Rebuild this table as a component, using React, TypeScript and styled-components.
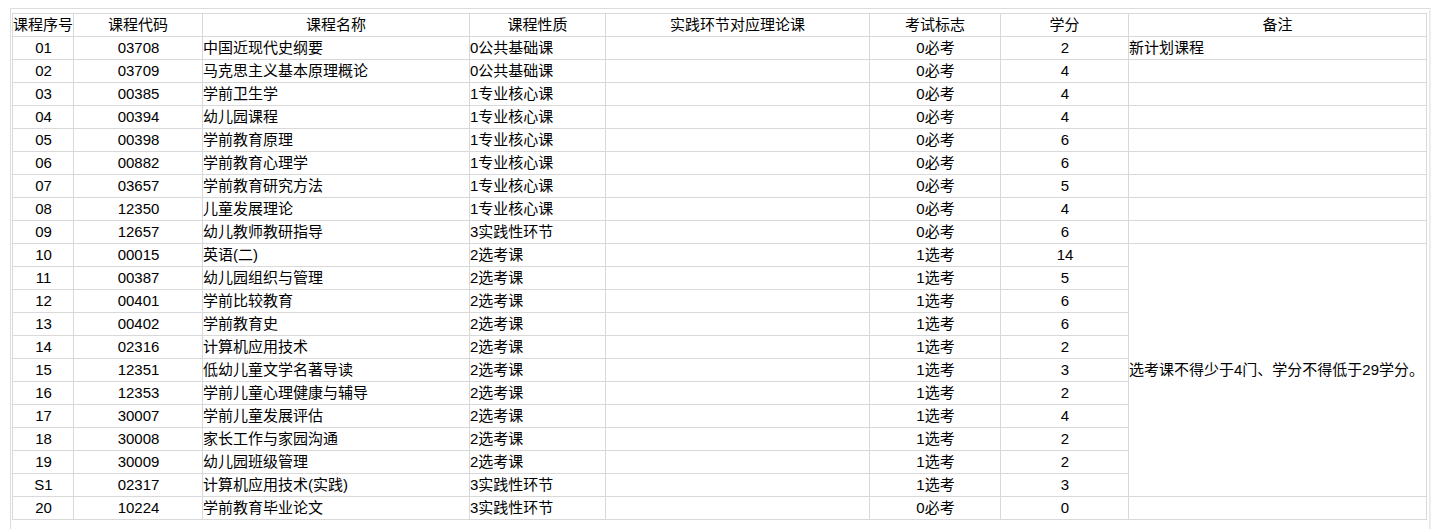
import React from "react";
import styled, { createGlobalStyle } from "styled-components";

const GlobalStyle = createGlobalStyle`
  html, body {
    margin: 0;
    padding: 0;
    background: #ffffff;
  }
  body {
    font-family: "Liberation Sans", "Noto Sans CJK SC", sans-serif;
    color: #000000;
  }
`;

const Frame = styled.div`
  margin: 8px 0 0 10px;
  min-height: 520px;
  border-top: 1px solid #dddddd;
  border-left: 1px solid #dddddd;
  display: flex;
  align-items: flex-start;
`;

const Sheet = styled.table`
  margin: 4px 0 0 1px;
  border-collapse: collapse;
  table-layout: fixed;
  width: 1414px;
  font-size: 15px;
  flex: none;
`;

const ScrollTrack = styled.div`
  align-self: stretch;
  width: 4px;
  margin: 1px 0 0 2px;
  background: #f0f0f0;
  border-left: 1px solid #e8e8e8;
`;

const Row = styled.tr`
  height: 23px;
`;

const Cell = styled.td<{ $align?: "left" | "center" }>`
  border: 1px solid #d9d9d9;
  padding: 0 0 0 ${(p) => (p.$align === "left" ? "0" : "1px")};
  height: 22px;
  line-height: 22px;
  white-space: nowrap;
  overflow: visible;
  text-align: ${(p) => p.$align ?? "center"};
  vertical-align: middle;
`;

const HeadCell = styled.th`
  border: 1px solid #d9d9d9;
  padding: 0;
  height: 22px;
  line-height: 22px;
  font-weight: normal;
  text-align: center;
  white-space: nowrap;
`;

const widths = [61, 129, 267, 136, 264, 131, 128, 298];

const headers = [
  "课程序号",
  "课程代码",
  "课程名称",
  "课程性质",
  "实践环节对应理论课",
  "考试标志",
  "学分",
  "备注",
];

type Course = [string, string, string, string, string, string];

const rows: Course[] = [
  ["01", "03708", "中国近现代史纲要", "0公共基础课", "0必考", "2"],
  ["02", "03709", "马克思主义基本原理概论", "0公共基础课", "0必考", "4"],
  ["03", "00385", "学前卫生学", "1专业核心课", "0必考", "4"],
  ["04", "00394", "幼儿园课程", "1专业核心课", "0必考", "4"],
  ["05", "00398", "学前教育原理", "1专业核心课", "0必考", "6"],
  ["06", "00882", "学前教育心理学", "1专业核心课", "0必考", "6"],
  ["07", "03657", "学前教育研究方法", "1专业核心课", "0必考", "5"],
  ["08", "12350", "儿童发展理论", "1专业核心课", "0必考", "4"],
  ["09", "12657", "幼儿教师教研指导", "3实践性环节", "0必考", "6"],
  ["10", "00015", "英语(二)", "2选考课", "1选考", "14"],
  ["11", "00387", "幼儿园组织与管理", "2选考课", "1选考", "5"],
  ["12", "00401", "学前比较教育", "2选考课", "1选考", "6"],
  ["13", "00402", "学前教育史", "2选考课", "1选考", "6"],
  ["14", "02316", "计算机应用技术", "2选考课", "1选考", "2"],
  ["15", "12351", "低幼儿童文学名著导读", "2选考课", "1选考", "3"],
  ["16", "12353", "学前儿童心理健康与辅导", "2选考课", "1选考", "2"],
  ["17", "30007", "学前儿童发展评估", "2选考课", "1选考", "4"],
  ["18", "30008", "家长工作与家园沟通", "2选考课", "1选考", "2"],
  ["19", "30009", "幼儿园班级管理", "2选考课", "1选考", "2"],
  ["S1", "02317", "计算机应用技术(实践)", "3实践性环节", "1选考", "3"],
  ["20", "10224", "学前教育毕业论文", "3实践性环节", "0必考", "0"],
];

const MERGE_START = 9;
const MERGE_SPAN = 11;

function remarkCell(i: number) {
  if (i === 0) return <Cell $align="left">新计划课程</Cell>;
  if (i === MERGE_START)
    return (
      <Cell $align="left" rowSpan={MERGE_SPAN}>
        选考课不得少于4门、学分不得低于29学分。
      </Cell>
    );
  if (i > MERGE_START && i < MERGE_START + MERGE_SPAN) return null;
  return <Cell $align="left" />;
}

export default function App() {
  return (
    <>
      <GlobalStyle />
      <Frame>
        <Sheet>
          <colgroup>
            {widths.map((w, i) => (
              <col key={i} style={{ width: w }} />
            ))}
          </colgroup>
          <thead>
            <Row>
              {headers.map((h) => (
                <HeadCell key={h}>{h}</HeadCell>
              ))}
            </Row>
          </thead>
          <tbody>
            {rows.map((r, i) => (
              <Row key={r[0]}>
                <Cell>{r[0]}</Cell>
                <Cell>{r[1]}</Cell>
                <Cell $align="left">{r[2]}</Cell>
                <Cell $align="left">{r[3]}</Cell>
                <Cell />
                <Cell>{r[4]}</Cell>
                <Cell>{r[5]}</Cell>
                {remarkCell(i)}
              </Row>
            ))}
          </tbody>
        </Sheet>
        <ScrollTrack />
      </Frame>
    </>
  );
}
